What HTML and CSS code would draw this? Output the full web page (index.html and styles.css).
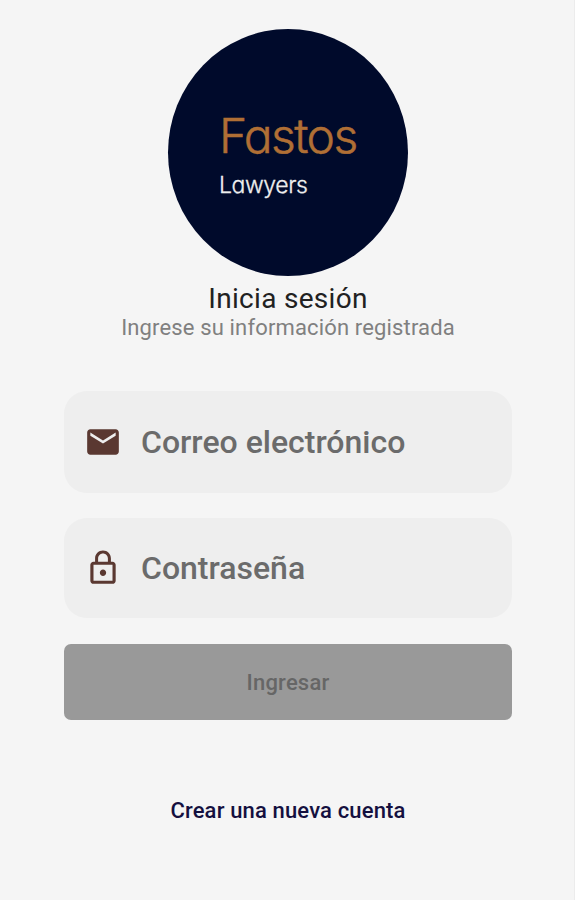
FILE: index.html
```
<!DOCTYPE html>
<html lang="es">
<head>
    <meta charset="UTF-8">
    <meta name="viewport" content="width=device-width, initial-scale=1.0">
    <title>Fastos Lawyers</title>
    <link rel="stylesheet" href="styles.css">
</head>
<body>

    <main class="login">
        <div class="logo">
            <span class="logo-name">Fastos</span>
            <span class="logo-sub">Lawyers</span>
        </div>

        <h1 class="title">Inicia sesión</h1>
        <p class="subtitle">Ingrese su información registrada</p>

        <form class="login-form">
            <label class="field field-email">
                <svg class="icon" viewBox="0 0 24 24">
                    <path d="M20 4H4c-1.1 0-1.99.9-1.99 2L2 18c0 1.1.9 2 2 2h16c1.1 0 2-.9 2-2V6c0-1.1-.9-2-2-2zm0 4l-8 5-8-5V6l8 5 8-5v2z"/>
                </svg>
                <input type="email" placeholder="Correo electrónico">
            </label>
            <label class="field field-password">
                <svg class="icon" viewBox="0 0 24 24">
                    <path d="M12 17c1.1 0 2-.9 2-2s-.9-2-2-2-2 .9-2 2 .9 2 2 2zm6-9h-1V6c0-2.76-2.24-5-5-5S7 3.24 7 6v2H6c-1.1 0-2 .9-2 2v10c0 1.1.9 2 2 2h12c1.1 0 2-.9 2-2V10c0-1.1-.9-2-2-2zM8.9 6c0-1.71 1.39-3.1 3.1-3.1s3.1 1.39 3.1 3.1v2H8.9V6zM18 20H6V10h12v10z"/>
                </svg>
                <input type="password" placeholder="Contraseña">
            </label>
            <button class="submit" type="submit" disabled>Ingresar</button>
        </form>

        <a class="register" href="#">Crear una nueva cuenta</a>
    </main>

</body>
</html>
```
FILE: styles.css
```
* {
    box-sizing: border-box;
}
body {
    margin: 0;
    font-family: Roboto, sans-serif;
    background-color: #f5f5f5;
}
.login {
    display: flex;
    flex-direction: column;
    align-items: center;
    height: 900px;
    padding: 29px 62px 0 64px;
    border-right: 1px solid #ececec;
}
.logo {
    display: flex;
    flex-direction: column;
    width: 240px;
    height: 247px;
    padding: 80px 0 0 51px;
    border-radius: 50%;
    background-color: #000a2b;
    font-family: Inter, sans-serif;
    font-feature-settings: "cv11";
}
.logo-name {
    font-size: 48px;
    line-height: 54px;
    font-weight: 300;
    letter-spacing: -1.6px;
    color: #b06f35;
    -webkit-text-stroke: 0.5px #b06f35;
}
.logo-sub {
    margin-top: 4px;
    font-size: 23px;
    line-height: 36px;
    font-weight: 300;
    letter-spacing: -0.4px;
    color: #eeeeee;
    -webkit-text-stroke: 0.3px #eeeeee;
}
.title {
    margin: 7px 0 0;
    font-size: 28px;
    line-height: 32px;
    font-weight: 400;
    letter-spacing: 0.3px;
    color: #212121;
}
.subtitle {
    margin: 0;
    font-size: 22px;
    line-height: 26px;
    letter-spacing: 0.15px;
    color: #808080;
}
.login-form {
    display: flex;
    flex-direction: column;
    width: 448px;
    margin-top: 50px;
}
.field {
    display: flex;
    align-items: center;
    height: 102px;
    margin-bottom: 25px;
    padding-left: 20px;
    border-radius: 23px;
    background-color: #eeeeee;
}
.field-password {
    height: 100px;
    margin-bottom: 26px;
}
.icon {
    width: 38px;
    height: 38px;
    margin-right: 19px;
    fill: #5a3831;
}
.field input {
    flex: 1;
    min-width: 0;
    padding: 0;
    border: none;
    outline: none;
    background: none;
    font-family: inherit;
    font-size: 32px;
    font-weight: 500;
}
.field input::placeholder {
    color: #6b6b6b;
}
.submit {
    height: 76px;
    padding: 0;
    border: none;
    border-radius: 7px;
    background-color: #999999;
    font-family: inherit;
    font-size: 22px;
    font-weight: 500;
    letter-spacing: 0.2px;
    color: #666666;
}
.register {
    margin-top: 78px;
    font-size: 22px;
    line-height: 26px;
    font-weight: 500;
    letter-spacing: 0.15px;
    color: #14103f;
    text-decoration: none;
}
```
